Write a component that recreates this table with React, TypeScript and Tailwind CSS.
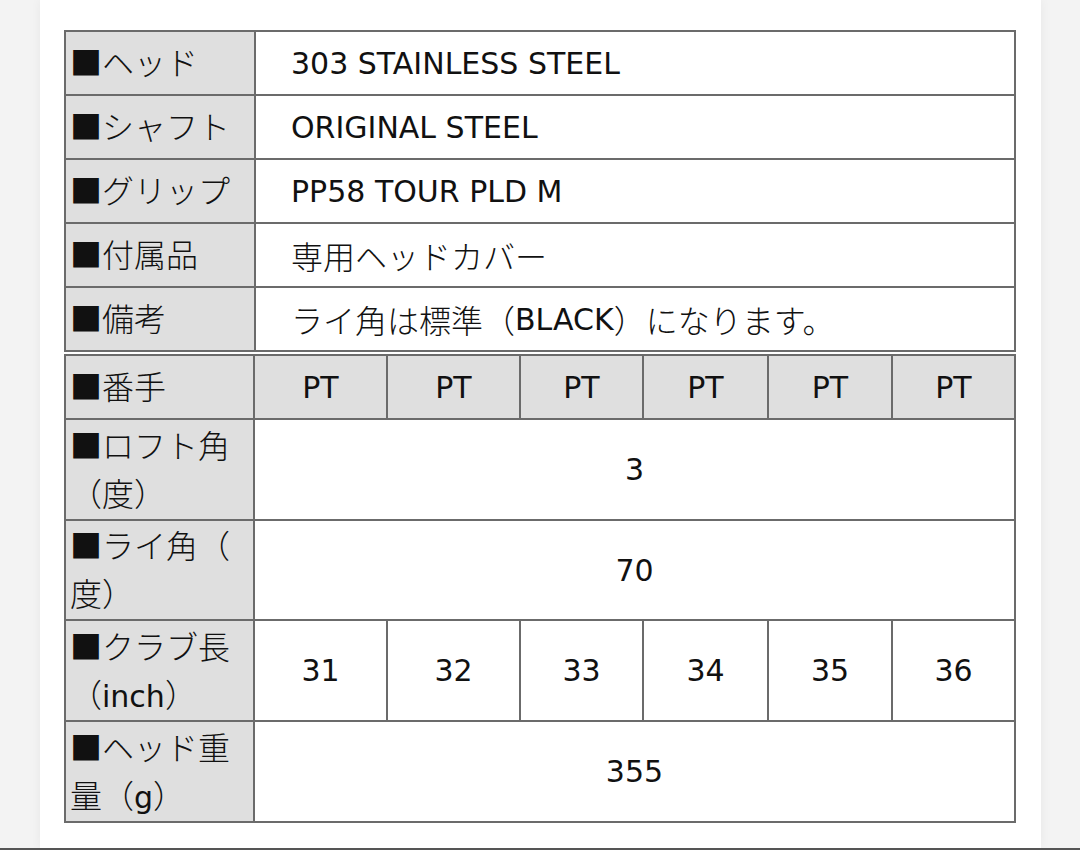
import React from "react";

function mix(text: string): React.ReactNode[] {
  const parts = text.split(/([\u25a0\u3000-\u30ff\u4e00-\u9fff\uff00-\uffef]+)/);
  return parts
    .filter((p) => p.length > 0)
    .map((p, i) =>
      /[\u25a0\u3000-\u30ff\u4e00-\u9fff\uff00-\uffef]/.test(p) ? (
        <span key={i} className="text-[32px] font-light font-['Noto_Sans_CJK_JP',sans-serif]">
          {p}
        </span>
      ) : (
        <span key={i}>{p}</span>
      )
    );
}

function Label({ lines }: { lines: string[] }) {
  return (
    <div className="bg-[#dfdfdf] flex items-center pl-[4px] leading-[44px]">
      <div>
        {lines.map((l, i) => (
          <div key={i} className="whitespace-nowrap">
            {mix(l)}
          </div>
        ))}
      </div>
    </div>
  );
}

function Val({ text }: { text: string }) {
  return <div className="bg-white flex items-center pl-[35px] whitespace-nowrap">{mix(text)}</div>;
}

function C({ children, gray }: { children: React.ReactNode; gray?: boolean }) {
  return (
    <div className={(gray ? "bg-[#dfdfdf]" : "bg-white") + " flex items-center justify-center whitespace-nowrap"}>
      {children}
    </div>
  );
}

function Span6({ children }: { children: React.ReactNode }) {
  return <div className="col-span-6 bg-white flex items-center justify-center">{children}</div>;
}

export default function App() {
  const lengths = ["31", "32", "33", "34", "35", "36"];
  return (
    <div className="h-[850px] w-[1080px] bg-[#f3f3f3] flex flex-col text-[30px] text-[#111] font-['DejaVu_Sans','Noto_Sans_CJK_JP',sans-serif]">
      <div className="flex-1 flex">
        <div className="ml-[40px] w-[1001px] bg-white shadow-[0_0_10px_rgba(0,0,0,0.05)] pt-[30px] pl-[24px]">
          <div className="w-[952px] grid grid-cols-[188px_758px] auto-rows-[62px] gap-[2px] p-[2px] bg-[#6b6b6b]">
            <Label lines={["■ヘッド"]} />
            <Val text="303 STAINLESS STEEL" />
            <Label lines={["■シャフト"]} />
            <Val text="ORIGINAL STEEL" />
            <Label lines={["■グリップ"]} />
            <Val text="PP58 TOUR PLD M" />
            <Label lines={["■付属品"]} />
            <Val text="専用ヘッドカバー" />
            <Label lines={["■備考"]} />
            <Val text="ライ角は標準（BLACK）になります。" />
          </div>
          <div className="mt-[2px] w-[952px] grid grid-cols-[187px_131px_131px_121px_123px_122px_121px] grid-rows-[62px_99px_98px_99px_99px] gap-[2px] p-[2px] bg-[#6b6b6b]">
            <Label lines={["■番手"]} />
            {[0, 1, 2, 3, 4, 5].map((i) => (
              <C key={i} gray>
                PT
              </C>
            ))}
            <Label lines={["■ロフト角", "（度）"]} />
            <Span6>3</Span6>
            <Label lines={["■ライ角（", "度）"]} />
            <Span6>70</Span6>
            <Label lines={["■クラブ長", "（inch）"]} />
            {lengths.map((l) => (
              <C key={l}>{l}</C>
            ))}
            <Label lines={["■ヘッド重", "量（g）"]} />
            <Span6>355</Span6>
          </div>
        </div>
      </div>
      <div className="h-[2px] bg-[#555]" />
    </div>
  );
}
